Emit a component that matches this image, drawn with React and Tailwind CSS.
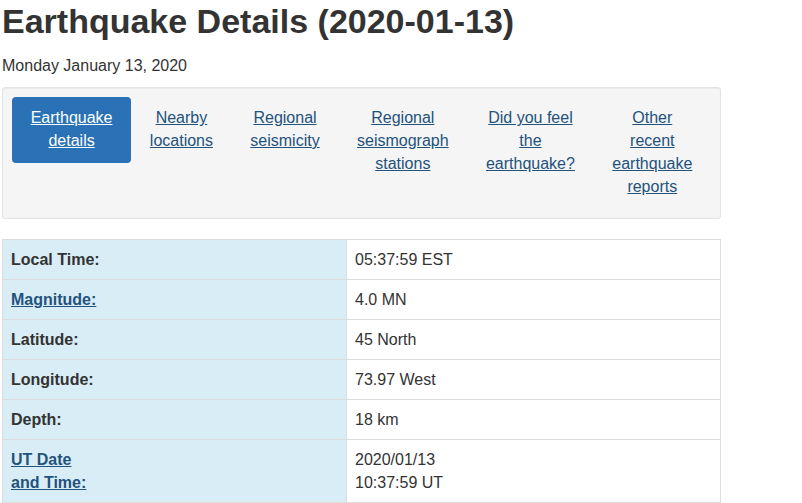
import React from 'react'

const tabs = [
  { label: 'Earthquake details', active: true },
  { label: 'Nearby locations' },
  { label: 'Regional seismicity' },
  { label: 'Regional seismograph stations' },
  { label: 'Did you feel the earthquake?' },
  { label: 'Other recent earthquake reports' },
]

const rows = [
  { k: 'Local Time:', v: ['05:37:59 EST'] },
  { k: 'Magnitude:', v: ['4.0 MN'], link: true },
  { k: 'Latitude:', v: ['45 North'] },
  { k: 'Longitude:', v: ['73.97 West'] },
  { k: 'Depth:', v: ['18 km'] },
  { k: 'UT Date and Time:', v: ['2020/01/13', '10:37:59 UT'], link: true, split: ['UT Date', 'and Time:'] },
]

export default function App() {
  return (
    <div className="min-h-screen bg-white pl-[2px] text-[16px] leading-[1.42857] text-[#333]" style={{ fontFamily: '"Liberation Sans", Arial, sans-serif' }}>
      <div className="w-[719px]">
        <h1 className="pt-[3px] text-[34px] font-bold leading-[1.1]">Earthquake Details (2020-01-13)</h1>
        <p className="mt-[15px]">Monday January 13, 2020</p>

        <div className="mt-[9px] rounded-[3px] border border-[#e3e3e3] bg-[#f5f5f5] p-[9px] shadow-[inset_0_1px_1px_rgba(0,0,0,0.05)]">
          <ul className="flex">
            {tabs.map((t) => (
              <li key={t.label} className="w-min grow text-center">
                <a
                  href="#"
                  className={
                    t.active
                      ? 'block rounded-[4px] bg-[#2a72b5] px-[15px] py-[10px] text-white underline'
                      : 'block px-[15px] py-[10px] text-[#23527c] underline'
                  }
                >
                  {t.label}
                </a>
              </li>
            ))}
          </ul>
        </div>

        <table className="mt-[20px] w-full border-collapse border border-[#ddd] leading-[23px]">
          <tbody>
            {rows.map((r) => (
              <tr key={r.k}>
                <td className="w-[344px] border border-[#ddd] bg-[#d9edf7] p-[8px] align-top font-bold">
                  {r.link ? (
                    <a href="#" className="text-[#23527c] underline">
                      {r.split ? (<>{r.split[0]}<br />{r.split[1]}</>) : r.k}
                    </a>
                  ) : r.k}
                </td>
                <td className="border border-[#ddd] p-[8px] align-top">
                  {r.v.map((x, i) => (<div key={i}>{x}</div>))}
                </td>
              </tr>
            ))}
          </tbody>
        </table>
      </div>
    </div>
  )
}
